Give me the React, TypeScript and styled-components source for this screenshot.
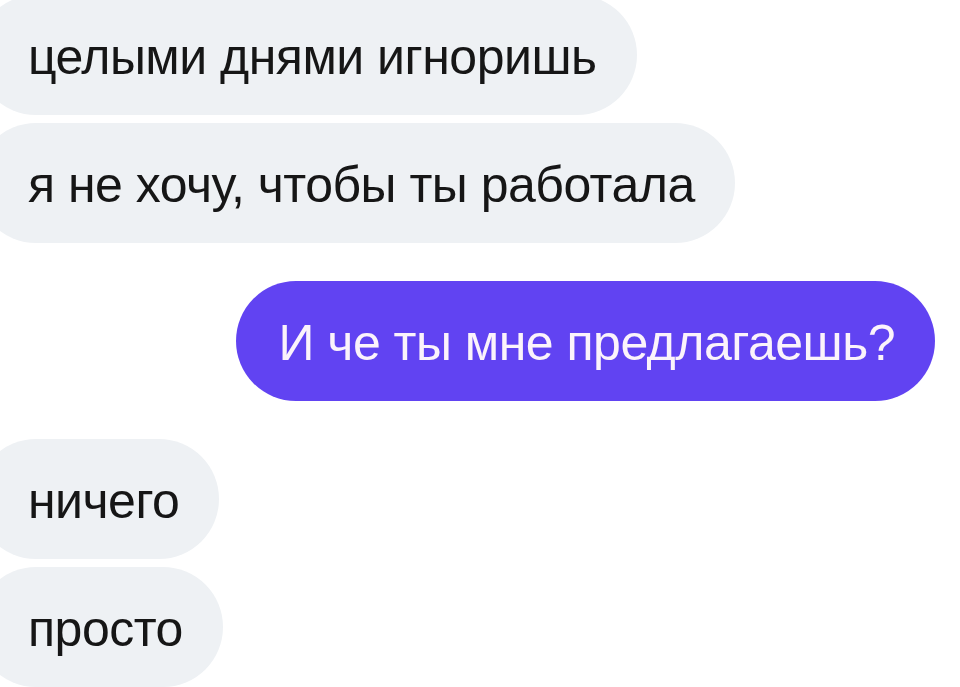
import styled, { createGlobalStyle } from 'styled-components';

interface Message {
  id: number;
  text: string;
  mine: boolean;
  groupStart: boolean;
}

const messages: Message[] = [
  { id: 1, text: 'целыми днями игноришь', mine: false, groupStart: true },
  { id: 2, text: 'я не хочу, чтобы ты работала', mine: false, groupStart: false },
  { id: 3, text: 'И че ты мне предлагаешь?', mine: true, groupStart: true },
  { id: 4, text: 'ничего', mine: false, groupStart: true },
  { id: 5, text: 'просто', mine: false, groupStart: false },
];

function App() {
  return (
    <>
      <GlobalStyle />
      <ChatStyle>
        {messages.map((m) => (
          <Bubble key={m.id} $mine={m.mine} $groupStart={m.groupStart}>
            {m.text}
          </Bubble>
        ))}
      </ChatStyle>
    </>
  );
}

const GlobalStyle = createGlobalStyle`
  html, body {
    margin: 0;
    padding: 0;
    background: #ffffff;
    overflow: hidden;
  }
`;

const ChatStyle = styled.div`
  display: flex;
  flex-direction: column;
  width: 960px;
  height: 687px;
  box-sizing: border-box;
  overflow: hidden;
  font-family: 'Liberation Sans', Arial, sans-serif;

  & > :first-child {
    margin-top: -5px;
  }
`;

const Bubble = styled.div<{ $mine: boolean; $groupStart: boolean }>`
  display: flex;
  align-items: center;
  box-sizing: border-box;
  height: 120px;
  flex-shrink: 0;
  border-radius: 60px;
  font-size: 50px;
  font-weight: 400;
  letter-spacing: -0.5px;
  white-space: nowrap;
  margin-top: ${({ $groupStart }) => ($groupStart ? '38px' : '8px')};
  align-self: ${({ $mine }) => ($mine ? 'flex-end' : 'flex-start')};
  background: ${({ $mine }) => ($mine ? '#6143f2' : '#eef1f4')};
  color: ${({ $mine }) => ($mine ? '#fbf3fb' : '#161616')};
  margin-left: ${({ $mine }) => ($mine ? '0' : '-24px')};
  margin-right: ${({ $mine }) => ($mine ? '25px' : '0')};
  padding: ${({ $mine }) => ($mine ? '3px 40px 0 43px' : '3px 40px 0 52px')};
`;

export default App;
